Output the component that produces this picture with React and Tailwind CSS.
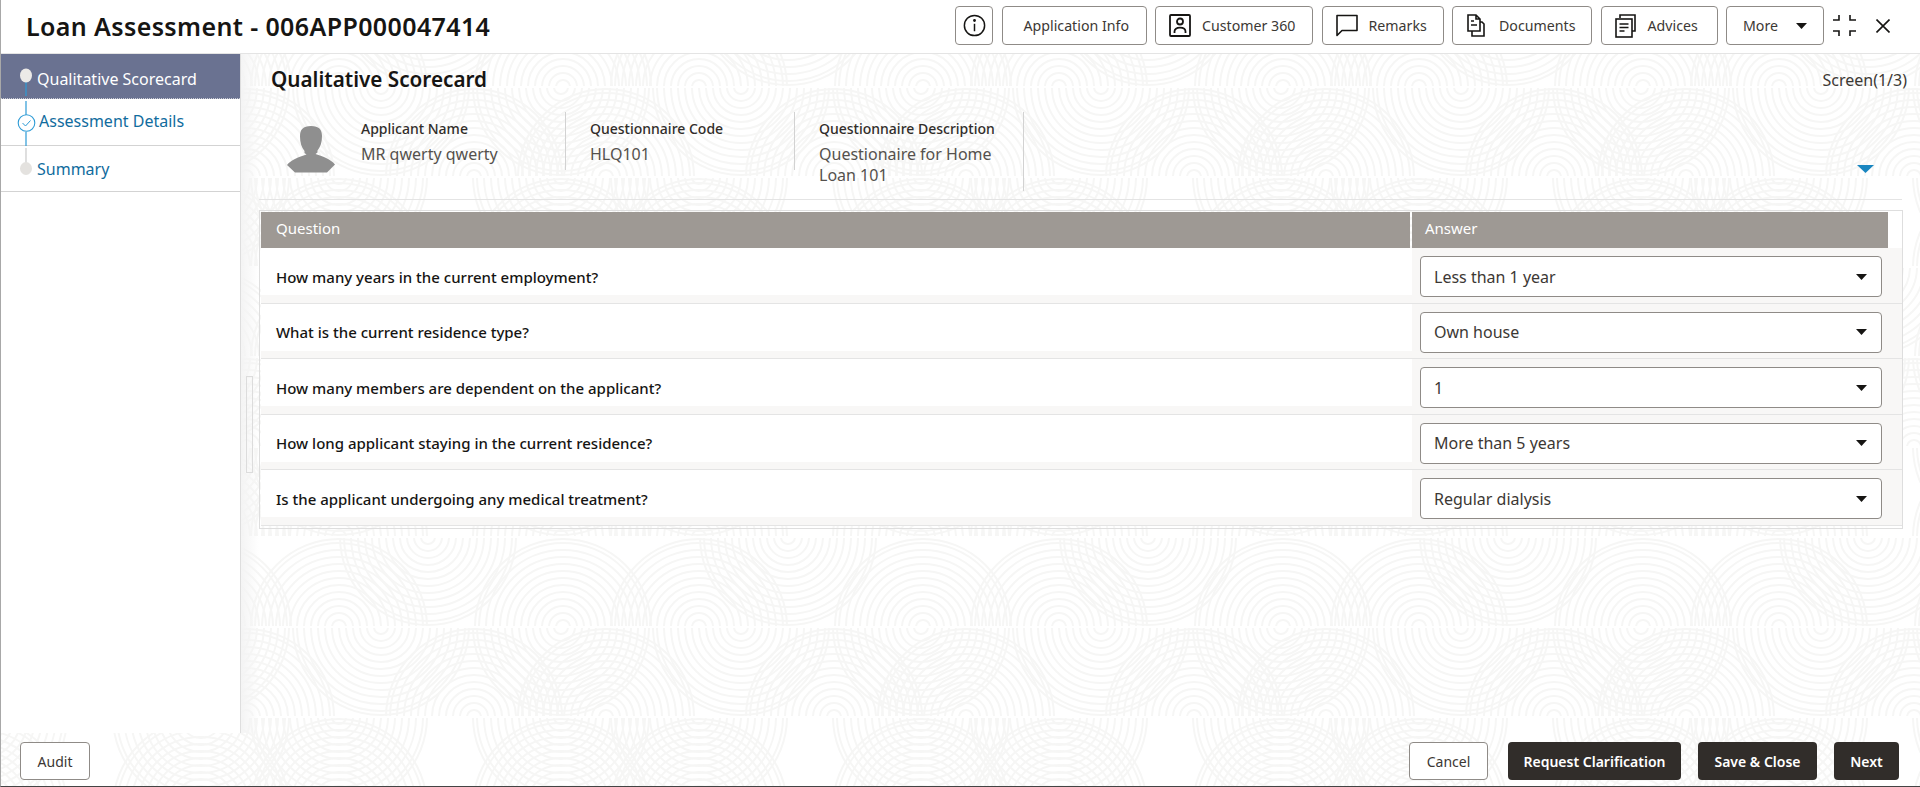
import React from 'react';

// concentric arcs of the page backdrop, one tile is 360x270 split in three bands
const bands = [
  { id: 'bandA', y: 0, arcs: [[338, 90], [202, 90], [67, 0]] },
  { id: 'bandB', y: 90, arcs: [[113, 180], [245, 180], [20, 90], [200, 90]] },
  { id: 'bandC', y: 180, arcs: [[338, 270], [200, 270], [338, 180], [200, 180]] },
];
const radii = [7, 14, 21, 28, 35, 42, 49, 56, 63, 70, 77, 84, 88];

const Backdrop = () => (
  <svg className="absolute inset-0 w-full h-full" xmlns="http://www.w3.org/2000/svg">
    <defs>
      {bands.map((b) => (
        <clipPath id={b.id} key={b.id}>
          <rect x="0" y={b.y + 1} width="360" height="88" />
        </clipPath>
      ))}
      <pattern id="prints" x="0" y="-3" width="360" height="270" patternUnits="userSpaceOnUse">
        {bands.map((b) => (
          <g key={b.id} clipPath={`url(#${b.id})`} fill="none" stroke="#f6f6f5" strokeWidth="2">
            {b.arcs.map(([cx, cy]) =>
              [-360, 0, 360].map((shift) =>
                radii.map((r) => <circle key={`${cx}-${cy}-${shift}-${r}`} cx={cx + shift} cy={cy} r={r} />)
              )
            )}
          </g>
        ))}
      </pattern>
    </defs>
    <rect width="100%" height="100%" fill="url(#prints)" />
  </svg>
);

const InfoIcon = () => (
  <svg width="23" height="23" viewBox="0 0 20 20" fill="none" stroke="#161513" strokeWidth="1.3">
    <circle cx="10" cy="10" r="8.8" />
    <path d="M10 8.500v6.500" />
    <circle cx="10" cy="5.600" r="0.6" fill="#161513" />
  </svg>
);
const CustomerIcon = () => (
  <svg width="22" height="23" viewBox="0 0 22 23" fill="none" stroke="#161513" strokeWidth="1.8">
    <rect x="1" y="1" width="20" height="21" rx="1" />
    <circle cx="11" cy="7.500" r="3" />
    <path d="M5.500 19v-1.500c0-2.500 2-3.800 5.500-3.800s5.500 1.300 5.500 3.800V19" />
  </svg>
);
const RemarksIcon = () => (
  <svg width="22" height="23" viewBox="0 0 22 23" fill="none" stroke="#161513" strokeWidth="1.6">
    <path d="M1 1.500h20v15H6l-5 5z" strokeLinejoin="round" />
  </svg>
);
const DocumentsIcon = () => (
  <svg width="18" height="23" viewBox="0 0 18 23" fill="none" stroke="#161513" strokeWidth="1.6">
    <path d="M1 1h8l4 4v12H1zM9 1v4h4" />
    <path d="M13 8h2l2 2v12H5v-5" />
    <path d="M4 7h3M4 11h6" />
  </svg>
);
const AdvicesIcon = () => (
  <svg width="21" height="24" viewBox="0 0 21 24" fill="none" stroke="#161513" strokeWidth="1.6">
    <path d="M5 4V1h15v16h-3" />
    <rect x="1" y="5" width="16" height="18" />
    <path d="M4.500 10h9M4.500 13.500h9M4.500 17h5" />
  </svg>
);
const Caret = ({ className = 'w-[11px] h-[6px]' }) => (
  <svg className={className} viewBox="0 0 11 6">
    <path d="M0 0h11L5.500 6z" fill="#161513" />
  </svg>
);

const toolbar = [
  { label: 'Application Info', box: 'w-[145px] pl-[21px]' },
  { label: 'Customer 360', box: 'w-[158px] pl-[13px] gap-[11px]', icon: <CustomerIcon /> },
  { label: 'Remarks', box: 'w-[122px] pl-[13px] gap-[11px]', icon: <RemarksIcon /> },
  { label: 'Documents', box: 'w-[140px] pl-[14px] gap-[14px]', icon: <DocumentsIcon /> },
  { label: 'Advices', box: 'w-[117px] pl-[13px] gap-[12px]', icon: <AdvicesIcon /> },
];

const questions = [
  ['How many years in the current employment?', 'Less than 1 year'],
  ['What is the current residence type?', 'Own house'],
  ['How many members are dependent on the applicant?', '1'],
  ['How long applicant staying in the current residence?', 'More than 5 years'],
  ['Is the applicant undergoing any medical treatment?', 'Regular dialysis'],
];

const Header = () => (
  <header className="h-[54px] shrink-0 flex items-start bg-white border-b border-[#e4e4e4] relative z-10">
    <h1 className="ml-[25px] mt-[9px] text-[25px] leading-[34px] font-semibold text-[#161513] tracking-[0.38px] flex-1">
      Loan Assessment - 006APP000047414
    </h1>
    <div className="flex items-center gap-[8.5px] mt-[6px] text-[14.2px] text-[#3c3834]">
      <button className="w-[38px] h-[39px] flex items-center justify-center border border-[#8f8b87] rounded-[4px]">
        <InfoIcon />
      </button>
      {toolbar.map((item) => (
        <button
          key={item.label}
          className={`${item.box} h-[39px] flex items-center border border-[#8f8b87] rounded-[4px]`}
        >
          {item.icon}
          <span>{item.label}</span>
        </button>
      ))}
      <button className="w-[98px] h-[39px] flex items-center pl-[16px] gap-[18px] border border-[#8f8b87] rounded-[4px]">
        <span>More</span>
        <Caret />
      </button>
    </div>
    <svg className="mt-[15px] ml-[9px]" width="23" height="21" viewBox="0 0 23 21" fill="none" stroke="#161513" strokeWidth="1.6">
      <path d="M0 5h6V0M23 5h-6V0M0 16h6v5M23 16h-6v5" />
    </svg>
    <svg className="mt-[19px] ml-[20px] mr-[30px]" width="14" height="14" viewBox="0 0 14 14" fill="none" stroke="#161513" strokeWidth="1.6">
      <path d="M0.500 0.500l13 13M13.500 0.500l-13 13" />
    </svg>
  </header>
);

const Sidebar = () => (
  <aside className="w-[240px] shrink-0 bg-white border-r border-[#dedede] relative text-[16px]">
    <div className="h-[45px] flex items-center pl-[36px] pt-[5px] bg-[#6a7291] text-white border-b border-dotted border-[#c9cbd4]">
      Qualitative Scorecard
    </div>
    <div className="h-[47px] pl-[38px] pt-[8px] leading-[28px] text-[#116c9e] border-b border-[#d3d3d3]">
      Assessment Details
    </div>
    <div className="h-[46px] flex items-center pl-[36px] text-[#116c9e] border-b border-[#d3d3d3]">Summary</div>
    <svg className="absolute left-[13px] top-0" width="26" height="138" viewBox="0 0 26 138" fill="none">
      <path d="M12 28v14M12 47v14M12 78v14" stroke="#2d9bd6" strokeWidth="1.2" />
      <path d="M12 94v16" stroke="#c9c9c9" strokeWidth="1.2" />
      <ellipse cx="12" cy="21.500" rx="6" ry="7" fill="#eceae7" />
      <circle cx="12.500" cy="69" r="8.300" fill="#ffffff" stroke="#2d9bd6" strokeWidth="1.1" />
      <path d="M8.500 69l3 3 5-5.500" stroke="#2d9bd6" strokeWidth="1" />
      <ellipse cx="12" cy="114.500" rx="6" ry="6.500" fill="#e4e2df" />
    </svg>
  </aside>
);

const InfoColumn = ({ label, value, className }) => (
  <div className={className}>
    <div className="text-[14px] leading-[20px] font-medium text-[#312d2a]">{label}</div>
    <div className="mt-[5px] text-[16px] leading-[21px] text-[#55514d]">{value}</div>
  </div>
);

const ApplicantInfo = () => (
  <div className="h-[96px] flex items-start pt-[8px] border-b border-[#e4e4e4] mr-[18px]">
    <svg className="mt-[14px] ml-[28px] mr-[26px]" width="48" height="47" viewBox="0 0 48 47">
      <path
        d="M24 0c-8 0-11 3.500-11 10.500 0 6 1.500 11 4.500 14.500v2l2 1.500c-8 2.500-15 5-19.500 10.500L8 46.500h32l8-8c-4.500-5.500-11.500-8-19.500-10.500l2-1.500v-2c3-3.500 4.500-8.500 4.500-14.500C35 3.500 32 0 24 0z"
        fill="#8f8f8f"
      />
    </svg>
    <InfoColumn label="Applicant Name" value="MR qwerty qwerty" className="w-[205px] h-[58px] border-r border-[#d2d2d2] pt-[7px]" />
    <InfoColumn label="Questionnaire Code" value="HLQ101" className="w-[229px] h-[58px] pl-[24px] border-r border-[#d2d2d2] pt-[7px]" />
    <InfoColumn
      label="Questionnaire Description"
      value={<>Questionaire for Home<br />Loan 101</>}
      className="w-[229px] h-[79px] pl-[24px] border-r border-[#d2d2d2] pt-[7px]"
    />
    <svg className="ml-auto mt-[53px] mr-[28px]" width="17" height="8" viewBox="0 0 17 8">
      <path d="M0 0h17L8.500 8z" fill="#1a86c0" />
    </svg>
  </div>
);

const QuestionTable = () => (
  <div className="mt-[10px] mr-[17px] h-[319px] border border-[#dedede] pt-[1px] pl-[1px]">
    <div className="flex h-[36px] mr-[14px] text-[15px] text-white gap-[2px]">
      <div className="w-[1149px] bg-[#9e9994] pl-[15px] pb-[3px] flex items-center">Question</div>
      <div className="flex-1 bg-[#9e9994] pl-[13px] pb-[3px] flex items-center">Answer</div>
    </div>
    {questions.map(([question, answer]) => (
      <div key={question} className="h-[55.5px] flex bg-[#f8f7f6] border-b border-[#e4e4e4]">
        <div className="w-[1151px] h-[47px] bg-white pl-[15px] pt-[11px] flex items-center text-[15px] font-medium text-[#161513]">
          {question}
        </div>
        <div className="flex-1 pt-[8px] pl-[8px] pr-[20px]">
          <div className="h-[41px] bg-white border border-[#8f8b87] rounded-[4px] flex items-center justify-between pl-[13px] pr-[14px] text-[16px] text-[#3c3834]">
            <span>{answer}</span>
            <Caret />
          </div>
        </div>
      </div>
    ))}
  </div>
);

const Footer = () => (
  <footer className="h-[53px] shrink-0 flex items-start pt-[9px] pl-[19px] pr-[21px] text-[14px] relative z-10">
    <button className="w-[70px] h-[38px] bg-white border border-[#8f8b87] rounded-[4px] text-[#3c3834]">Audit</button>
    <button className="w-[79px] h-[38px] ml-auto bg-white border border-[#8f8b87] rounded-[4px] text-[#3c3834]">Cancel</button>
    <button className="w-[173px] h-[38px] ml-[20px] bg-[#312d2a] rounded-[4px] text-white font-semibold">Request Clarification</button>
    <button className="w-[119px] h-[38px] ml-[17px] bg-[#312d2a] rounded-[4px] text-white font-semibold">Save &amp; Close</button>
    <button className="w-[65px] h-[38px] ml-[17px] bg-[#312d2a] rounded-[4px] text-white font-semibold">Next</button>
  </footer>
);

export default function App() {
  return (
    <div className="relative h-[787px] flex flex-col bg-white border-l border-b border-l-[#a8a8a8] border-b-[#444444] overflow-hidden font-['Noto_Sans',sans-serif]">
      <Backdrop />
      <Header />
      <div className="flex flex-1 min-h-0 relative">
        <Sidebar />
        <main className="flex-1 relative pl-[18px]">
          <div className="absolute left-0 top-0 bottom-0 w-[18px] bg-gradient-to-r from-[#f4f4f4] to-transparent" />
          <div className="absolute left-[5px] top-[322px] w-[7px] h-[97px] border border-[#dcdcdc]" />
          <div className="relative h-[50px] flex items-center justify-between pl-[12px] pr-[13px] pt-[1px]">
            <h2 className="text-[20.7px] font-semibold text-[#161513]">Qualitative Scorecard</h2>
            <span className="text-[16px] text-[#3c3834]">Screen(1/3)</span>
          </div>
          <div className="relative">
            <ApplicantInfo />
            <QuestionTable />
          </div>
        </main>
      </div>
      <Footer />
    </div>
  );
}
